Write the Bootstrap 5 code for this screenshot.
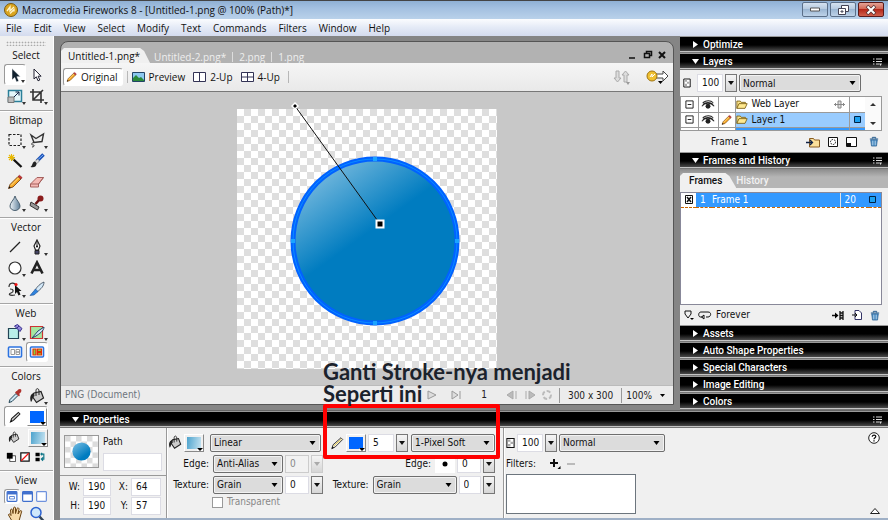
<!DOCTYPE html>
<html lang="en">
<head>
<meta charset="utf-8">
<meta name="viewport" content="width=device-width, initial-scale=1">
<title>Macromedia Fireworks 8</title>
<link rel="stylesheet" href="https://cdn.jsdelivr.net/npm/bootstrap@5.3.0/dist/css/bootstrap.min.css">
<style>
:root { --face:#f0f0f0; --edge:#8c8c8c; --ui:"Open Sans","Noto Sans",sans-serif; --ctl:"DejaVu Sans Condensed","Open Sans",sans-serif; --head:Roboto,"Open Sans",sans-serif; }
body { font:10px/14px var(--ui); color:#111; background:#858585; overflow:hidden; }
svg { display:block; flex:none; overflow:visible; }
button, input, select { font:inherit; color:inherit; }
button { padding:0; border:0; background:none; }
.i16 { width:16px; height:16px; }

/* window frame */
.titlebar { height:19px; background:linear-gradient(#444 1px,#8fb0d4 1px,#a3c0e0 8px,#b9d1ea); }
.winbtns { gap:2px; }
.winbtn { width:26px; height:15px; border:1px solid #5b6f88; border-radius:2px; background:linear-gradient(#d5e2f0,#b3c8de 50%,#9cb7d3 50%,#bdd2e8); display:grid; place-items:center; }
.winbtn.shut { background:linear-gradient(#e3a396,#d2604e 50%,#b5281a 50%,#d0604d); border-color:#5a1a1a; }
.menubar { height:17px; background:linear-gradient(#fbfcfe,#e4eaf6 50%,#d4dbee); gap:12px; padding:0 6px; }
.menubar a { color:#111; text-decoration:none; }
.short { min-height:0; } .narrow { min-width:0; }

/* tool strip */
.tools { width:54px; background:var(--face); border-right:1px solid #fff; }
.grip { height:5px; margin:5px 7px 0 6px; background:radial-gradient(circle,#aaa 40%,transparent 50%) 0 0/3px 3px; }
.toolset { border-bottom:1px solid #a6a6a6; padding:0 5px 4px 4px; box-shadow:0 1px #fff; }
.toolset h2 { font-size:10px; line-height:18px; font-weight:500; margin:0; text-align:center; }
.toolgrid { display:grid; grid-template-columns:1fr 1fr; grid-auto-rows:21px; }
.toolgrid.tight { grid-auto-rows:20px; }
.toolgrid button { display:grid; place-items:center; position:relative; }
.toolgrid .more::after { content:""; position:absolute; right:0; bottom:1px; border:2px solid transparent; border-top:3px solid #333; border-bottom:0; }
.picked { background:#fff; border:1px solid #999 !important; border-right-color:#fff !important; border-bottom-color:#fff !important; border-radius:3px; }
.inkrow { height:21px; padding:0 0 0 4px; }

/* document */
.doc { margin:5px 6px 5px 6px; border:1px solid #555; border-radius:8px 8px 0 0; background:#b2b2b2; min-width:0; }
.tabs { height:21px; color:#eee; }
.tabs button { line-height:16px; }
.tabs .front { color:#111; background:var(--face); height:15px; margin-top:6px; padding:0 10px 0 7px; clip-path:polygon(0 3px,3px 0,calc(100% - 10px) 0,calc(100% - 6px) 3px,100% 100%,0 100%); }
.tabs .div { width:1px; height:10px; background:#ddd; margin:0 6px; }
.viewbar { height:29px; background:linear-gradient(#f5f5f5,#e9e9e9); border-bottom:1px solid #777; font-weight:500; }
.viewbar .original { height:18px; padding:0 4px 0 2px; margin-left:2px; }
.stage { background:#c8c8c8; min-height:0; }
.statusbar { height:19px; background:#ececec; border-top:1px solid #bbb; color:#222; }
.statusbar .cell { border-left:1px solid #999; line-height:15px; }
.playback { gap:10px; margin-right:6px; }

/* dock panels */
.dock { width:208px; background:var(--face); }
.bar { height:17px; color:#fff; background:linear-gradient(#999 1px,#000 1px,#000 9px,#4a4a4a 15px,#aaa 15px,#ddd 16px,#777 16px); padding:0 6px 0 12px; flex:none; }
.bar h2 { font:500 10px/16px var(--head); margin:0; }
.bar .tri { width:7px; height:7px; margin-right:4px; }
.lines { width:9px; height:8px; }

/* controls */
.ctl { font:10px/14px var(--ctl); }
.form-select.pick { --bs-form-select-bg-img:url("data:image/svg+xml,%3csvg xmlns='http://www.w3.org/2000/svg' viewBox='0 0 6 4'%3e%3cpath d='M0 0h6L3 4z'/%3e%3c/svg%3e"); height:18px; padding:1px 12px 0 3px; font:inherit; color:#111; border:1px solid #6e6e6e; border-radius:2px; background-color:#dcdcdc; background-size:7px 4px; background-position:right 4px center; box-shadow:inset 0 0 0 1px #f2f2f2; flex:none; }
.box { height:18px; border:1px solid #dcdce4; border-radius:0; background:#fff; padding:0 0 1px 7px; min-width:0; }
.box:disabled { background:#f2f2f2; color:#888; border-color:#ccc; }
.drop { width:12px; height:18px; border:1px solid #777; background:linear-gradient(#f5f5f5,#d6d6d6); display:grid; place-items:center; flex:none; }
.drop::before { content:""; border:3px solid transparent; border-top:4px solid #111; border-bottom:0; }
.drop:disabled { border-color:#ccc; } .drop:disabled::before { border-top-color:#aaa; }
.swatch { width:20px; height:18px; border:1px solid #fff; border-right-color:#888; border-bottom-color:#888; padding:2px; position:relative; flex:none; }
.swatch i { display:block; width:100%; height:100%; background:#06f; }
.swatch .blend { background:linear-gradient(100deg,#4da3cd,#c6e3f1); }
.swatch::after { content:""; position:absolute; right:0; bottom:0; border:3px solid #fff; border-top:3px solid #000; border-bottom-width:0; }

/* layers and frames */
.oprow { gap:2px; padding:4px 3px; }
.layerlist { margin:0 6px 0 0; height:35px; border:1px solid #999; background:#fff; overflow:hidden; }
.layerlist table, .framelist table { width:100%; border-collapse:collapse; table-layout:fixed; }
.layerlist td { height:15px; padding:0; border:solid #9a9a9a; border-width:0 1px 1px 0; }
.layerlist td:last-child { border-right:0; }
.layerlist .on { background:#99ccff; }
.layerlist .next { background:#39f; }
.layerfoot { height:21px; padding:0 5px 0 31px; }
.ptabs { height:19px; background:linear-gradient(#8b8b8b,#b5b5b5 8px); color:#f2f2f2; font:500 10px/14px var(--head); }
.ptabs .front { color:#111; background:var(--face); height:15px; margin-top:4px; padding:0 14px 0 9px; clip-path:polygon(0 3px,3px 0,calc(100% - 11px) 0,calc(100% - 7px) 3px,100% 100%,0 100%); }
.framelist { margin:4px 6px 0 0; border:1px solid #889; background:#fff; }
.framelist td { padding:0; height:14px; line-height:12px; color:#fff; background:#39f; border-bottom:1px dashed #c60; }
.framelist td:first-child { background:#fff; color:#111; }
.framefoot { height:20px; }

/* properties */
.props { background:var(--face); margin:0 0 0 6px; min-height:110px; border-top:1px solid #666; }
.pcol { border-right:1px solid #999; box-shadow:1px 0 #fff; padding:4px 0 0 0; flex:none; }
.thumb { width:35px; height:33px; border:1px solid #999; margin-top:3px; }
.who { width:107px; }
.ident { gap:4px; padding-bottom:4px; border-bottom:1px solid #999; }
.ident label { margin-top:3px; }
.dims { display:grid; grid-template-columns:20px 28px 20px 30px; row-gap:1px; padding:2px 3px 0; }
.dims label { text-align:right; padding:2px 3px 0 0; }
.fills { width:158px; border:0; box-shadow:none; }
.strokes { width:179px; }
.line2 { height:21px; gap:2px; }
.lab { width:44px; text-align:right; padding-right:2px; }
.strokes .line2 { padding:0 8px 0 5px; }
.trans { padding-left:45px; color:#888; }
.trans input { width:11px; height:11px; border-color:#999; }
.callout { position:absolute; left:-2px; top:-24px; right:3px; height:55px; border:4px solid #f00; border-radius:2px; pointer-events:none; z-index:3; }
.scrawl { position:absolute; left:-2px; top:-67px; font:700 22px/22px Lato,sans-serif; color:#1b222c; white-space:nowrap; z-index:4; margin:0; }
.scrawl span { display:block; }
.w24 { width:24px; } .w26 { width:26px; } .w70 { width:70px; } .w84 { width:84px; } .w106 { width:106px; } .w111 { width:111px; } .w122 { width:122px; }
.effects { padding:4px 4px 0 2px; }
.filterlist { width:130px; height:40px; }
.foot { height:2px; background:#9fb0c6; }
</style>
<script src="https://cdn.jsdelivr.net/npm/bootstrap@5.3.0/dist/js/bootstrap.bundle.min.js"></script>
</head>
<body class="d-flex flex-column vh-100">

<svg width="0" height="0" class="position-absolute" aria-hidden="true">
 <defs>
  <linearGradient id="ball" gradientUnits="userSpaceOnUse" x1="58" y1="-3" x2="143" y2="115"><stop offset="0" stop-color="#dceef7"/><stop offset="1" stop-color="#007cc0"/></linearGradient>
  <linearGradient id="mini" x1="0" y1="0" x2=".6" y2=".8"><stop offset="0" stop-color="#7cc0e4"/><stop offset="1" stop-color="#007cc0"/></linearGradient>
  <linearGradient id="drop" x1="0" y1="0" x2="1" y2="0"><stop offset="0" stop-color="#eef4f8"/><stop offset="1" stop-color="#5f7f99"/></linearGradient>
  <pattern id="chk" width="14" height="14" patternUnits="userSpaceOnUse"><path fill="#fff" d="M0 0h14v14H0z"/><path fill="#dedede" d="M7 0h7v7H7zM0 7h7v7H0z"/></pattern>
  <pattern id="chk2" width="12" height="12" patternUnits="userSpaceOnUse"><path fill="#fff" d="M0 0h12v12H0z"/><path fill="#dcdcdc" d="M0 0h6v6H0zM6 6h6v6H6z"/></pattern>
 </defs>
 <symbol id="pencil" viewBox="0 0 16 16"><path d="M1.500 14.500l1.500-4L11 2.500l3 2.500-8 8z" fill="#f6a623" stroke="#6b3a12" stroke-width=".8"/><path d="M4 11.500L12 3.500" stroke="#ffe08a"/><path d="M11 2.500l1.500-1.200 2.600 2.300L14 5z" fill="#c33" stroke="#822" stroke-width=".6"/><path d="M1.500 14.500l.8-2.200 1.500 1.400z" fill="#111"/></symbol>
 <symbol id="pen2" viewBox="0 0 16 16"><path d="M2 14.500l1.500-4.500L12.500 2l2 2L6 12.500z" fill="#eee" stroke="#222"/><path d="M4 11.500L13 3.500" stroke="#e0c020"/><path d="M2 14.500l1-2.600 1.500 1.600z"/></symbol>
 <symbol id="pen3" viewBox="0 0 16 16"><path d="M2 14.500l1.500-4.500L12.500 2l2 2L6 12.500z" fill="#aaa" stroke="#222" stroke-width="1.400"/><path d="M4 11.500L13 3.500" stroke="#eee"/><path d="M2 14.500l1-2.600 1.500 1.600z"/></symbol>
 <symbol id="arrowB" viewBox="0 0 16 16"><path d="M5 1.500v11.500l2.700-2.500 1.800 4.500 2.300-1-1.900-4.300h3.500z" fill="#10202e" stroke="#fff" stroke-width=".5"/></symbol>
 <symbol id="arrowW" viewBox="0 0 16 16"><path d="M5 2v10l2.300-2.200 1.700 4 1.800-.8-1.700-3.800h3z" fill="#fff" stroke="#223"/></symbol>
 <symbol id="scale" viewBox="0 0 16 16"><path d="M1.500 2.500h13v11h-13z" fill="#e3f6fa" stroke="#2a7f99" stroke-width="1.500"/><path d="M1 9h6v5.500H1z" fill="#bbb" stroke="#777"/><path d="M7 9l5-5m-3.500 0H12v3.500" stroke="#124" fill="none"/></symbol>
 <symbol id="crop" viewBox="0 0 16 16"><path d="M4 1v11h11M1 4h11v11M4 12l10-10" fill="none" stroke="#333" stroke-width="1.600"/></symbol>
 <symbol id="marq" viewBox="0 0 16 16"><path d="M2 2.500h12v11H2z" fill="none" stroke="#222" stroke-width="1.200" stroke-dasharray="2.500 1.500"/></symbol>
 <symbol id="lasso" viewBox="0 0 16 16"><path d="M2 3l5 3.500L14.500 2 13 9.500 5 10.500z" fill="#eee" stroke="#333" stroke-width="1.400"/><path d="M5 10.500c-3 0-3 3-.5 2.500 1 0 1 2-1.500 2" fill="none" stroke="#333"/></symbol>
 <symbol id="wand" viewBox="0 0 16 16"><path d="M6 6l8.500 8" stroke="#111" stroke-width="2.400"/><path d="M4.500 1v7M1 4.500h7M2 2l5 5M7 2L2 7" stroke="#e8b800" stroke-width="1.100"/></symbol>
 <symbol id="brush" viewBox="0 0 16 16"><path d="M14.500 1.500L8 8" stroke="#1c52b8" stroke-width="3.500"/><path d="M14 2L8 7.500" stroke="#79aef5"/><path d="M8.800 6L5.500 8.800l2 2L10.500 8z" fill="#ddd" stroke="#777" stroke-width=".6"/><path d="M6 8.500c-3 0-2 4-4.500 5.500 3.500 1 6.500-.5 6-4z" fill="#222"/></symbol>
 <symbol id="eraser" viewBox="0 0 16 16"><path d="M1.500 10L8 3.500h6.500L9.500 10v3h-8z" fill="#f5b9b4" stroke="#a6615e"/><path d="M1.500 10h8l5-6.500" fill="none" stroke="#a6615e"/></symbol>
 <symbol id="drip" viewBox="0 0 16 16"><path d="M8 1C7 5 3 7.500 3 11a5 4.500 0 0010 0C13 7.500 9 5 8 1z" fill="url(#drop)" stroke="#4b6070"/></symbol>
 <symbol id="stamp" viewBox="0 0 16 16"><circle cx="11.500" cy="3.500" r="3" fill="#8a1c1c"/><path d="M10 5L6.500 9" stroke="#611" stroke-width="2.600"/><path d="M2 7l8 5-1.500 3L1 10.500z" fill="#999" stroke="#333"/></symbol>
 <symbol id="line" viewBox="0 0 16 16"><path d="M3 13L13 3" stroke="#222" stroke-width="1.200"/></symbol>
 <symbol id="nib" viewBox="0 0 16 16"><path d="M8 1L5 7l1.500 4h3L11 7z" fill="#fff" stroke="#222" stroke-width="1.200"/><path d="M8 2v5" stroke="#222"/><circle cx="8" cy="7.500" r="1"/><path d="M6 11.500h4V15H6z" fill="#446" stroke="#222"/></symbol>
 <symbol id="oval" viewBox="0 0 16 16"><circle cx="8" cy="8" r="6" fill="#fff" stroke="#333" stroke-width="1.200"/></symbol>
 <symbol id="bigA" viewBox="0 0 16 16"><path d="M2.500 13.500L8 2.500l5.500 11M4.500 10h7" fill="none" stroke="#222" stroke-width="2.600"/></symbol>
 <symbol id="free" viewBox="0 0 16 16"><path d="M2 6c0-5 6-5 7-1M3 8c4 0 4 3 1 4-3 1-2 3 4 2" fill="none" stroke="#333" stroke-width="1.200"/><path d="M8 4v9l2-2 1.500 3.500 2-1L12 10h2.500z" fill="#111"/><circle cx="9" cy="3.500" r="1.600" fill="#e11"/></symbol>
 <symbol id="knife" viewBox="0 0 16 16"><path d="M6 9C8 6 11 2.500 15 1c0 4-3 7-7 10z" fill="#d3e8f8" stroke="#345" stroke-width=".8"/><path d="M1 14.500L6.500 8l2.500 2.500L5 14z" fill="#2f83dd" stroke="#1a4f94" stroke-width=".6"/></symbol>
 <symbol id="hot" viewBox="0 0 16 16"><path d="M1.500 4.500h10v10h-10z" fill="#b9efe9" stroke="#245" stroke-width="1.200"/><path d="M7.500 2l3-1.500 4.500 4-2 3z" fill="#8f88d8" stroke="#3a3090"/><path d="M9 5l3-3" stroke="#3a3090" fill="none"/></symbol>
 <symbol id="slice" viewBox="0 0 16 16"><path d="M1.500 2.500h12v12h-12z" fill="#a5e6a0" stroke="#c33" stroke-width="1.200"/><path d="M3 14l6-7 6-4c0 4-5 7-8 9z" fill="#cfe6f8" stroke="#246"/></symbol>
 <symbol id="webA" viewBox="0 0 16 16"><rect x="1.500" y="3" width="13" height="10" rx="1" fill="#fff" stroke="#2c73e0" stroke-width="1.600"/><path d="M4 5.500h3.500v5H4zM9 5.500h3.500V8H9zM9 8h3.500v2.500H9z" fill="none" stroke="#999"/></symbol>
 <symbol id="webB" viewBox="0 0 16 16"><rect x="1.500" y="3" width="13" height="10" rx="1" fill="#fff" stroke="#2c73e0" stroke-width="1.600"/><path d="M4 5h3v6H4zM8.500 5h4v2.500h-4zM8.500 8.700h4V11h-4z" fill="#8c4" stroke="#e03000" stroke-width="1.200"/></symbol>
 <symbol id="eye" viewBox="0 0 16 16"><path d="M2 14.500l1-3 6-6 2 2-6 6z" fill="#cfe7f5" stroke="#245"/><path d="M8 4.500l4 4 1-1.500-1-1c3-1.500 3-5 1-5s-3 2-3 2L9.500 3z" fill="#b0332e"/></symbol>
 <symbol id="bucket" viewBox="0 0 16 16"><path d="M5 5l7-1.500 2.500 6.500-7 4.500L3 8z" fill="#ccc" stroke="#222" stroke-width="1.200"/><path d="M5 5c-4 1-4.500 5-3 9 1.500-1 1-4 3.500-6z" fill="#222"/><path d="M7 8V2.500C7 0 10 0 10 3v4" fill="none" stroke="#222"/></symbol>
 <symbol id="dflt" viewBox="0 0 12 12"><path d="M4.500 4.500h7v7h-7z" fill="#fff" stroke="#333"/><path d="M1 1h7v7H1z"/></symbol>
 <symbol id="none" viewBox="0 0 12 12"><path d="M1 1h10v10H1z" fill="#fff" stroke="#111" stroke-width="1.500"/><path d="M1.500 10.500l9-9" stroke="#e11" stroke-width="1.500"/></symbol>
 <symbol id="swap" viewBox="0 0 12 12"><path d="M0 1h5v4H0zM0 7h5v4H0z"/><path d="M7 2.500h3v6H7m2-2l-2 2 2 2M8 1L6.500 2.500 8 4" fill="none" stroke="#178" stroke-width="1.400"/></symbol>
 <symbol id="vw1" viewBox="0 0 16 16"><rect x="2" y="2" width="12" height="12" rx="1" fill="#fff" stroke="#3f6fcd" stroke-width="1.500"/><path d="M2 4h12" stroke="#3f6fcd" stroke-width="3"/><path d="M5 8h6v3H5z" fill="none" stroke="#3f6fcd"/></symbol>
 <symbol id="vw2" viewBox="0 0 16 16"><rect x="2" y="2" width="12" height="12" rx="1" fill="#fff" stroke="#3f6fcd" stroke-width="1.500"/><path d="M2 4h12" stroke="#3f6fcd" stroke-width="3"/></symbol>
 <symbol id="vw3" viewBox="0 0 16 16"><rect x="2" y="2" width="12" height="12" rx="1" fill="#fff" stroke="#6f92dd" stroke-width="1.500"/></symbol>
 <symbol id="hand" viewBox="0 0 16 16"><path d="M5 15L1.500 9c0-1.500 1.500-1.500 2.500.5L3.500 4c.5-1.500 2-1 2 .5L6 7.500 6.500 2c.5-1.500 2-1 2 0v5.500L10 2.500c1-1.200 2-.5 2 .8L11 8l2-3c1-1 2 0 1.500 1L12 15z" fill="#f7d9a8" stroke="#6b4312"/></symbol>
 <symbol id="zoom" viewBox="0 0 16 16"><path d="M10.500 10.500L14.500 15" stroke="#345" stroke-width="2.500"/><circle cx="7" cy="6.500" r="5" fill="#cfe8fb" stroke="#2c62d0" stroke-width="1.500"/></symbol>
 <symbol id="opac" viewBox="0 0 10 12"><path d="M1 1h8v10H1z" fill="#fff" stroke="#111" stroke-width="1.200"/><path d="M2 2h3v2.500H2zM5 4.500h3V7H5zM2 7h3v3H2z" fill="#aaa"/></symbol>
 <symbol id="folder" viewBox="0 0 14 12"><path d="M1 10.500V2h4l1 1.500h5V5" fill="#fbe58c" stroke="#7a5d10"/><path d="M1 10.500L3.500 5H13l-2.500 5.500z" fill="#ffe98f" stroke="#7a5d10"/></symbol>
 <symbol id="newfolder" viewBox="0 0 14 12"><path d="M3.500 11V2.500h4l1 1.500h5v7z" fill="#fbdf9a" stroke="#8a5d20"/><path d="M0 6.500h6M4 4l2.500 2.500L4 9" fill="none" stroke="#124" stroke-width="1.300"/></symbol>
 <symbol id="look" viewBox="0 0 16 12"><path d="M1 8c3-4 10-5 14 0M2 4c4-3 9-3 12 0M2 6c4-3 8-3 12 0" fill="none" stroke="#222" stroke-width="1.200"/><circle cx="8" cy="8" r="2.800" fill="#222"/></symbol>
 <symbol id="minusbox" viewBox="0 0 10 10"><path d="M1 1h8v8H1z" fill="#fff" stroke="#111"/><path d="M3 5h4" stroke="#111"/></symbol>
 <symbol id="trash" viewBox="0 0 12 12"><path d="M1 3h10M4 2.500V1h4v1.500" stroke="#235a8c" fill="none" stroke-width="1.200"/><path d="M2 4h8l-1 7.500H3z" fill="#4f8fc4" stroke="#235a8c" stroke-width=".8"/><path d="M4.500 5v5.500M7.500 5v5.500" stroke="#d6eaf8" stroke-width=".8"/></symbol>
 <symbol id="lines" viewBox="0 0 9 8"><path d="M0 1h1.500M3 1h6M0 3.500h1.500M3 3.500h6M0 6h1.500M3 6h3" stroke="#ddd"/><path d="M6 5.500h3L7.500 8z" fill="#ddd"/></symbol>
 <symbol id="right" viewBox="0 0 7 7"><path d="M1 0l5 3.500L1 7z" fill="#fff"/></symbol>
 <symbol id="down" viewBox="0 0 7 7"><path d="M0 1h7L3.500 6z" fill="#fff"/></symbol>
</svg>

<header>
 <div class="titlebar d-flex align-items-center ps-1 pe-1">
  <svg width="14" height="14" viewBox="0 0 14 14"><circle cx="7" cy="7" r="6.500" fill="#d9a520" stroke="#7a5a10"/><path d="M3 8l3-4v4l4-4M6 10.500l4-4v2" stroke="#fff6cf" stroke-width="1.300" fill="none"/></svg>
  <span class="ms-1 flex-grow-1">Macromedia Fireworks 8 - [Untitled-1.png @ 100% (Path)*]</span>
  <div class="d-flex winbtns">
   <button class="winbtn" aria-label="Minimize"><svg width="10" height="5" viewBox="0 0 10 5"><path d="M.5 1h9v3h-9z" fill="#fff" stroke="#555"/></svg></button>
   <button class="winbtn" aria-label="Restore"><svg width="11" height="10" viewBox="0 0 11 10"><path d="M3.500.5h7v6h-7z" fill="#fff" stroke="#445"/><path d="M.5 3.500h7v6h-7zM3 6h2v1H3z" fill="#fff" stroke="#445"/></svg></button>
   <button class="winbtn shut" aria-label="Close"><svg width="10" height="8" viewBox="0 0 10 8"><path d="M1 0l8 8M9 0L1 8" stroke="#533" stroke-width="3.500"/><path d="M1.500.5l7 7M8.500.5l-7 7" stroke="#fff" stroke-width="2"/></svg></button>
  </div>
 </div>
 <nav class="menubar d-flex align-items-center">
  <a href="#">File</a><a href="#">Edit</a><a href="#">View</a><a href="#">Select</a><a href="#">Modify</a><a href="#">Text</a><a href="#">Commands</a><a href="#">Filters</a><a href="#">Window</a><a href="#">Help</a>
 </nav>
</header>

<div class="d-flex flex-grow-1 short">
 <aside class="tools flex-shrink-0">
  <div class="grip"></div>
  <section class="toolset"><h2>Select</h2><div class="toolgrid">
   <button class="picked more" aria-label="Pointer"><svg class="i16"><use href="#arrowB"/></svg></button><button aria-label="Subselection"><svg class="i16"><use href="#arrowW"/></svg></button>
   <button class="more" aria-label="Scale"><svg class="i16"><use href="#scale"/></svg></button><button class="more" aria-label="Crop"><svg class="i16"><use href="#crop"/></svg></button>
  </div></section>
  <section class="toolset"><h2>Bitmap</h2><div class="toolgrid">
   <button class="more" aria-label="Marquee"><svg class="i16"><use href="#marq"/></svg></button><button class="more" aria-label="Lasso"><svg class="i16"><use href="#lasso"/></svg></button>
   <button aria-label="Magic wand"><svg class="i16"><use href="#wand"/></svg></button><button aria-label="Brush"><svg class="i16"><use href="#brush"/></svg></button>
   <button aria-label="Pencil"><svg class="i16"><use href="#pencil"/></svg></button><button aria-label="Eraser"><svg class="i16"><use href="#eraser"/></svg></button>
   <button class="more" aria-label="Blur"><svg class="i16"><use href="#drip"/></svg></button><button class="more" aria-label="Rubber stamp"><svg class="i16"><use href="#stamp"/></svg></button>
  </div></section>
  <section class="toolset"><h2>Vector</h2><div class="toolgrid">
   <button aria-label="Line"><svg class="i16"><use href="#line"/></svg></button><button class="more" aria-label="Pen"><svg class="i16"><use href="#nib"/></svg></button>
   <button class="more" aria-label="Ellipse"><svg class="i16"><use href="#oval"/></svg></button><button aria-label="Text"><svg class="i16"><use href="#bigA"/></svg></button>
   <button class="more" aria-label="Freeform"><svg class="i16"><use href="#free"/></svg></button><button aria-label="Knife"><svg class="i16"><use href="#knife"/></svg></button>
  </div></section>
  <section class="toolset"><h2>Web</h2><div class="toolgrid tight">
   <button class="more" aria-label="Hotspot"><svg class="i16"><use href="#hot"/></svg></button><button class="more" aria-label="Slice"><svg class="i16"><use href="#slice"/></svg></button>
   <button aria-label="Hide slices"><svg class="i16"><use href="#webA"/></svg></button><button class="picked" aria-label="Show slices"><svg class="i16"><use href="#webB"/></svg></button>
  </div></section>
  <section class="toolset"><h2>Colors</h2><div class="toolgrid">
   <button aria-label="Eyedropper"><svg class="i16"><use href="#eye"/></svg></button><button class="more" aria-label="Paint bucket"><svg class="i16"><use href="#bucket"/></svg></button></div>
   <div class="inkrow picked d-flex align-items-center justify-content-between"><svg width="12" height="14"><use href="#pen3"/></svg><button class="swatch" aria-label="Stroke color"><i></i></button></div>
   <div class="inkrow d-flex align-items-center justify-content-between"><svg width="12" height="13"><use href="#bucket"/></svg><button class="swatch" aria-label="Fill color"><i class="blend"></i></button></div>
   <div class="d-flex justify-content-around align-items-end pt-1 pb-1"><button aria-label="Default colors"><svg width="10" height="10"><use href="#dflt"/></svg></button><button aria-label="No color"><svg width="10" height="10"><use href="#none"/></svg></button><button aria-label="Swap colors"><svg width="11" height="10"><use href="#swap"/></svg></button></div>
  </section>
  <section class="toolset border-0"><h2>View</h2>
   <div class="d-flex justify-content-between"><button class="picked" aria-label="Standard screen"><svg width="14" height="13"><use href="#vw1"/></svg></button><button aria-label="Full screen with menus"><svg width="13" height="13"><use href="#vw2"/></svg></button><button aria-label="Full screen"><svg width="13" height="13"><use href="#vw3"/></svg></button></div>
   <div class="toolgrid tight"><button aria-label="Hand"><svg class="i16"><use href="#hand"/></svg></button><button aria-label="Zoom"><svg class="i16"><use href="#zoom"/></svg></button></div>
  </section>
 </aside>

 <div class="d-flex flex-column flex-grow-1 narrow">
  <div class="d-flex flex-grow-1 short">
   <main class="doc d-flex flex-column flex-grow-1">
    <div class="tabs d-flex">
     <button class="front">Untitled-1.png*</button>
     <div class="d-flex align-items-center flex-grow-1 pt-2 ps-1"><button>Untitled-2.png*</button><span class="div"></span><button>2.png</button><span class="div"></span><button>1.png</button></div>
     <svg width="36" height="9" viewBox="0 0 36 9" class="mt-2 me-2"><path d="M0 8h6M15.500 3.500h5v4h-5zM17.500 3V1.500h5v4H21" fill="none" stroke="#111" stroke-width="1.500"/><path d="M30 2l6 6M36 2l-6 6" stroke="#111" stroke-width="2"/></svg>
    </div>
    <div class="viewbar d-flex align-items-center">
     <button class="picked original d-flex align-items-center"><svg width="11" height="12" class="me-1"><use href="#pencil"/></svg>Original</button>
     <span class="vr mx-1 my-2"></span>
     <button class="d-flex align-items-center me-2"><svg width="13" height="10" viewBox="0 0 13 10" class="me-1"><path d="M.5.5h12v9H.5z" fill="#8cc8f0" stroke="#246"/><path d="M1 9V6l3-3 3 3 2-1 3 3v1z" fill="#2a8a3a"/></svg>Preview</button>
     <button class="d-flex align-items-center me-2"><svg width="13" height="10" viewBox="0 0 13 10" class="me-1"><path d="M.5.500h12v9H.5zM6.500 0v10" fill="#fff" stroke="#335"/></svg>2-Up</button>
     <button class="d-flex align-items-center"><svg width="13" height="10" viewBox="0 0 13 10" class="me-1"><path d="M.5.500h12v9H.5zM6.500 0v10M0 5h13" fill="#fff" stroke="#335"/></svg>4-Up</button>
     <span class="vr mx-2 my-2"></span>
     <button class="ms-auto me-3" aria-label="File management"><svg width="17" height="14" viewBox="0 0 17 14"><path d="M3 1h3v7h2l-3.500 4L1 8h2zM11 12h3V5h2l-3.500-4L9 5h2z" fill="#ddd" stroke="#aaa"/><path d="M13 12h4l-2 3z" fill="#999"/></svg></button>
     <button class="me-1" aria-label="Quick export"><svg width="23" height="14" viewBox="0 0 23 14"><path d="M10 4h7V1l5 5-5 5V8h-7z" fill="#fff" stroke="#444"/><circle cx="6" cy="6" r="5" fill="#efc030" stroke="#a07410"/><path d="M4 7l2-3v3l3-3" stroke="#fff" fill="none"/><path d="M12 11h5l-2.500 3z"/></svg></button>
    </div>
    <div class="stage flex-grow-1 d-flex align-items-center justify-content-center">
     <svg width="260" height="260" viewBox="0 0 260 260">
      <path fill="url(#chk)" d="M0 0h260v260H0z"/>
      <circle cx="138" cy="132" r="82" fill="url(#ball)" stroke="#0062ff" stroke-width="5"/>
      <circle cx="138" cy="132" r="82" fill="none" stroke="#0a8cff" stroke-width="1"/>
      <path d="M136 48h4v4h-4zM136 212h4v4h-4zM54 130h4v4h-4zM218 130h4v4h-4z" fill="#1aa3ff"/>
      <path d="M58-3l85 118" stroke="#111"/>
      <path d="M58-6l3 3-3 3-3-3z" stroke="#fff" stroke-width="1.500"/>
      <path d="M139.500 111.500h7v7h-7z" stroke="#fff" stroke-width="2"/>
     </svg>
    </div>
    <div class="statusbar ctl d-flex align-items-center">
     <span class="ps-1 flex-grow-1 text-secondary">PNG (Document)</span>
     <div class="d-flex align-items-center playback">
      <svg width="44" height="10" viewBox="0 0 44 10"><path d="M1 1v8l8-4zM25 1v8l6-4zM33 1v8" fill="#ddd" stroke="#999"/></svg>
      <span>1</span>
      <svg width="56" height="10" viewBox="0 0 56 10"><path d="M16 1v8l-6-4zM19 1v8M29 1v8M32 1v8l6-4z" fill="#bbb" stroke="#aaa"/><circle cx="50" cy="5" r="4" fill="none" stroke="#bbb" stroke-width="2" stroke-dasharray="4 2"/></svg>
     </div>
     <span class="cell px-2">300 x 300</span>
     <button class="cell ps-1 pe-2 d-flex align-items-center">100%<svg width="5" height="3" viewBox="0 0 5 3" class="ms-2"><path d="M0 0h5L2.500 3z"/></svg></button>
    </div>
   </main>

   <aside class="dock flex-shrink-0 d-flex flex-column">
    <div class="bar d-flex align-items-center"><svg class="tri"><use href="#right"/></svg><h2>Optimize</h2></div>
    <div class="bar d-flex align-items-center"><svg class="tri"><use href="#down"/></svg><h2>Layers</h2><svg class="lines ms-auto"><use href="#lines"/></svg></div>
    <div class="ctl">
     <div class="d-flex align-items-center oprow">
      <svg width="8" height="12"><use href="#opac"/></svg>
      <input class="box w26 ps-1 ms-1" value="100" aria-label="Layer opacity"><button class="drop" aria-label="Choose opacity"></button>
      <select class="form-select pick w122" aria-label="Blend mode"><option>Normal</option></select>
     </div>
     <div class="layerlist d-flex">
      <table><colgroup><col style="width:17px"><col style="width:20px"><col style="width:17px"><col><col style="width:16px"></colgroup>
       <tr><td><svg width="9" height="9" class="mx-auto"><use href="#minusbox"/></svg></td><td><svg width="14" height="11" class="mx-auto"><use href="#look"/></svg></td><td></td><td><div class="d-flex align-items-center"><svg width="12" height="11" class="me-1"><use href="#folder"/></svg>Web Layer<svg width="11" height="9" viewBox="0 0 11 9" class="ms-auto me-1"><path d="M0 4.500h11M2 3L.5 4.500 2 6M9 3l1.500 1.500L9 6M4 1h3v7H4z" fill="#ddd" stroke="#888"/></svg></div></td><td></td></tr>
       <tr><td><svg width="9" height="9" class="mx-auto"><use href="#minusbox"/></svg></td><td><svg width="14" height="11" class="mx-auto"><use href="#look"/></svg></td><td><svg width="11" height="12" class="mx-auto"><use href="#pencil"/></svg></td><td class="on"><div class="d-flex align-items-center"><svg width="12" height="11" class="me-1"><use href="#folder"/></svg>Layer 1</div></td><td class="on"><svg width="7" height="7" viewBox="0 0 7 7" class="mx-auto"><path d="M.5.500h6v6h-6z" fill="#1aa0f0" stroke="#024"/></svg></td></tr>
       <tr><td></td><td></td><td></td><td class="next"></td><td class="next"></td></tr>
      </table>
      <svg width="16" height="33" viewBox="0 0 16 33"><path d="M0 0h16v33H0z" fill="#fafafa"/><path d="M5 9h6L8 6zM5 25h6l-3 3z" fill="#333"/></svg>
     </div>
     <div class="d-flex align-items-center layerfoot">
      <span class="me-auto">Frame 1</span>
      <button aria-label="New layer" class="me-2"><svg width="14" height="12"><use href="#newfolder"/></svg></button>
      <button aria-label="Add mask" class="me-2"><svg width="10" height="10" viewBox="0 0 10 10"><path d="M.5.500h9v9h-9z" fill="#fff" stroke="#111"/><circle cx="5" cy="5" r="2.500" fill="none" stroke="#111" stroke-dasharray="1.500 1"/></svg></button>
      <button aria-label="New bitmap" class="me-2"><svg width="11" height="10" viewBox="0 0 11 10"><path d="M.5.500h10v9H.5z" fill="#fff" stroke="#111"/><path d="M1 6h4v3.500H1z" fill="#111"/></svg></button>
      <button aria-label="Delete layer" class="ms-1 me-1"><svg width="10" height="11"><use href="#trash"/></svg></button>
     </div>
    </div>
    <div class="bar d-flex align-items-center"><svg class="tri"><use href="#down"/></svg><h2>Frames and History</h2><svg class="lines ms-auto"><use href="#lines"/></svg></div>
    <div class="ptabs d-flex flex-shrink-0"><button class="front">Frames</button><button class="pt-1">History</button></div>
    <div class="framelist flex-grow-1 ctl">
     <table><colgroup><col style="width:15px"><col style="width:16px"><col><col style="width:29px"><col style="width:12px"></colgroup>
      <tr><td><svg width="8" height="9" viewBox="0 0 8 9" class="mx-auto"><path d="M.5.500h7v8h-7z" fill="#fff" stroke="#111"/><path d="M2 2l4 5M6 2L2 7" stroke="#111" stroke-width="1.500"/></svg></td><td class="ps-1">1</td><td>Frame 1</td><td class="border-start ps-1">20</td><td><svg width="7" height="7" viewBox="0 0 7 7"><path d="M.5.500h6v6h-6z" fill="#1aa0f0" stroke="#024"/></svg></td></tr>
     </table>
    </div>
    <div class="d-flex align-items-center px-1 flex-shrink-0 ctl framefoot">
     <svg width="10" height="10" viewBox="0 0 10 10" class="me-1"><path d="M1 1h6v3L4 8 1 4z" fill="none" stroke="#111"/><path d="M6 8h4l-2 2z"/></svg>
     <svg width="14" height="10" viewBox="0 0 14 10" class="me-1"><path d="M5 7H2.500C0 7 0 2 3 2h7c4 0 3 5 0 5H8M6 5L3.500 7 6 9z" fill="none" stroke="#111"/></svg>
     <span class="me-auto">Forever</span>
     <svg width="12" height="9" viewBox="0 0 12 9" class="me-2"><path d="M0 4.500h5M8 0v9M11 0v9M8 2h3M8 4.500h3M8 7h3" stroke="#111" stroke-width="1.300"/><path d="M3 1.500l3.500 3-3.500 3z"/></svg>
     <button class="me-2" aria-label="New frame"><svg width="10" height="10" viewBox="0 0 10 10"><path d="M3 .500h4L9.500 3v6.500H3z" fill="#fff" stroke="#336"/><path d="M0 5h5m-2-2l2 2-2 2" stroke="#111" fill="none"/></svg></button>
     <button class="me-1" aria-label="Delete frame"><svg width="10" height="11"><use href="#trash"/></svg></button>
    </div>
    <div class="flex-shrink-0">
     <div class="bar d-flex align-items-center"><svg class="tri"><use href="#right"/></svg><h2>Assets</h2></div>
     <div class="bar d-flex align-items-center"><svg class="tri"><use href="#right"/></svg><h2>Auto Shape Properties</h2></div>
     <div class="bar d-flex align-items-center"><svg class="tri"><use href="#right"/></svg><h2>Special Characters</h2></div>
     <div class="bar d-flex align-items-center"><svg class="tri"><use href="#right"/></svg><h2>Image Editing</h2></div>
     <div class="bar d-flex align-items-center"><svg class="tri"><use href="#right"/></svg><h2>Colors</h2></div>
    </div>
   </aside>
  </div>

  <section class="props flex-shrink-0 d-flex flex-column">
   <div class="bar d-flex align-items-center"><svg class="tri"><use href="#down"/></svg><h2>Properties</h2><svg class="lines ms-auto"><use href="#lines"/></svg></div>
   <div class="ctl d-flex flex-grow-1">
    <div class="pcol who">
     <div class="d-flex px-1 ident">
      <svg class="thumb" viewBox="0 0 36 34"><path fill="url(#chk2)" d="M0 0h36v34H0z"/><circle cx="18" cy="17" r="10" fill="url(#mini)"/></svg>
      <div class="flex-grow-1"><label for="objname" class="d-block">Path</label><input id="objname" class="box w-100 d-block mt-1"></div>
     </div>
     <div class="dims">
      <label for="fw">W:</label><input id="fw" class="box ps-1" value="190"><label for="fx">X:</label><input id="fx" class="box ps-1" value="64">
      <label for="fh">H:</label><input id="fh" class="box ps-1" value="190"><label for="fy">Y:</label><input id="fy" class="box ps-1" value="57">
     </div>
    </div>
    <div class="pcol fills">
     <div class="d-flex align-items-center line2 justify-content-end pe-1"><svg width="14" height="15"><use href="#bucket"/></svg><button class="swatch me-1" aria-label="Fill"><i class="blend"></i></button><select class="form-select pick w111" aria-label="Fill type"><option>Linear</option></select></div>
     <div class="d-flex align-items-center line2"><label for="fe" class="lab">Edge:</label><select id="fe" class="form-select pick w70"><option>Anti-Alias</option></select><input class="box w24 ps-1" value="0" disabled aria-label="Feather"><button class="drop" disabled aria-label="Choose feather"></button></div>
     <div class="d-flex align-items-center line2"><label for="ft" class="lab">Texture:</label><select id="ft" class="form-select pick w70"><option>Grain</option></select><input class="box w24 ps-1" value="0" aria-label="Texture amount"><button class="drop" aria-label="Choose texture amount"></button></div>
     <div class="d-flex align-items-center trans"><input type="checkbox" id="tr" class="form-check-input rounded-0 m-0 me-1 opacity-100" disabled><label for="tr" class="opacity-100">Transparent</label></div>
    </div>
    <div class="pcol strokes position-relative">
     <div class="d-flex align-items-center line2"><svg width="14" height="14"><use href="#pen2"/></svg><button class="swatch" aria-label="Stroke"><i></i></button><input class="box w26 ps-1" value="5" aria-label="Tip size"><button class="drop" aria-label="Choose tip size"></button><select class="form-select pick w84 ms-auto" aria-label="Stroke type"><option>1-Pixel Soft</option></select></div>
     <div class="d-flex align-items-center line2 justify-content-end"><label for="se" class="lab">Edge:</label><svg width="20" height="18" viewBox="0 0 20 18"><path d="M0 0h20v18H0z" fill="#fff"/><circle cx="10" cy="9" r="2.500"/></svg><input id="se" class="box w24 ps-1" value="0"><button class="drop" aria-label="Choose edge softness"></button></div>
     <div class="d-flex align-items-center line2 justify-content-end"><label for="st" class="lab">Texture:</label><select id="st" class="form-select pick w84"><option>Grain</option></select><input class="box w24 ps-1" value="0" aria-label="Stroke texture amount"><button class="drop" aria-label="Choose stroke texture amount"></button></div>
     <div class="callout"></div>
     <p class="scrawl"><span>Ganti Stroke-nya menjadi</span><span>Seperti ini</span></p>
    </div>
    <div class="flex-grow-1 d-flex justify-content-between effects">
     <div>
      <div class="d-flex align-items-center line2"><svg width="9" height="12"><use href="#opac"/></svg><input class="box w26 ps-1" value="100" aria-label="Opacity"><button class="drop" aria-label="Choose object opacity"></button><select class="form-select pick w106" aria-label="Object blend mode"><option>Normal</option></select></div>
      <div class="d-flex align-items-center line2"><span>Filters:</span><button class="ms-2 ps-1" aria-label="Add filter"><svg width="11" height="10" viewBox="0 0 11 10"><path d="M0 4h8M4 0v8" stroke="#111" stroke-width="2"/><path d="M10.500 7v3h-3z"/></svg></button><button class="ms-1" aria-label="Remove filter"><svg width="8" height="2" viewBox="0 0 8 2"><path d="M0 1h8" stroke="#aaa" stroke-width="1.500"/></svg></button></div>
      <div class="bg-white border border-secondary filterlist"></div>
     </div>
     <div class="d-flex flex-column justify-content-between align-items-end pb-1 pe-1">
      <button aria-label="Help"><svg width="12" height="12" viewBox="0 0 12 12"><circle cx="6" cy="6" r="5.300" fill="#fff" stroke="#222"/><path d="M4.300 4.800C4.300 2.500 8 2.700 7.700 4.800 7.600 5.800 6 5.900 6 7.300M6 8.300v1.200" fill="none" stroke="#111" stroke-width="1.300"/></svg></button>
      <button aria-label="Collapse"><svg width="10" height="6" viewBox="0 0 10 6"><path d="M5 .500L9.500 5.500h-9z" fill="#fff" stroke="#222"/></svg></button>
     </div>
    </div>
   </div>
   <div class="foot"></div>
  </section>
 </div>
</div>
</body>
</html>
